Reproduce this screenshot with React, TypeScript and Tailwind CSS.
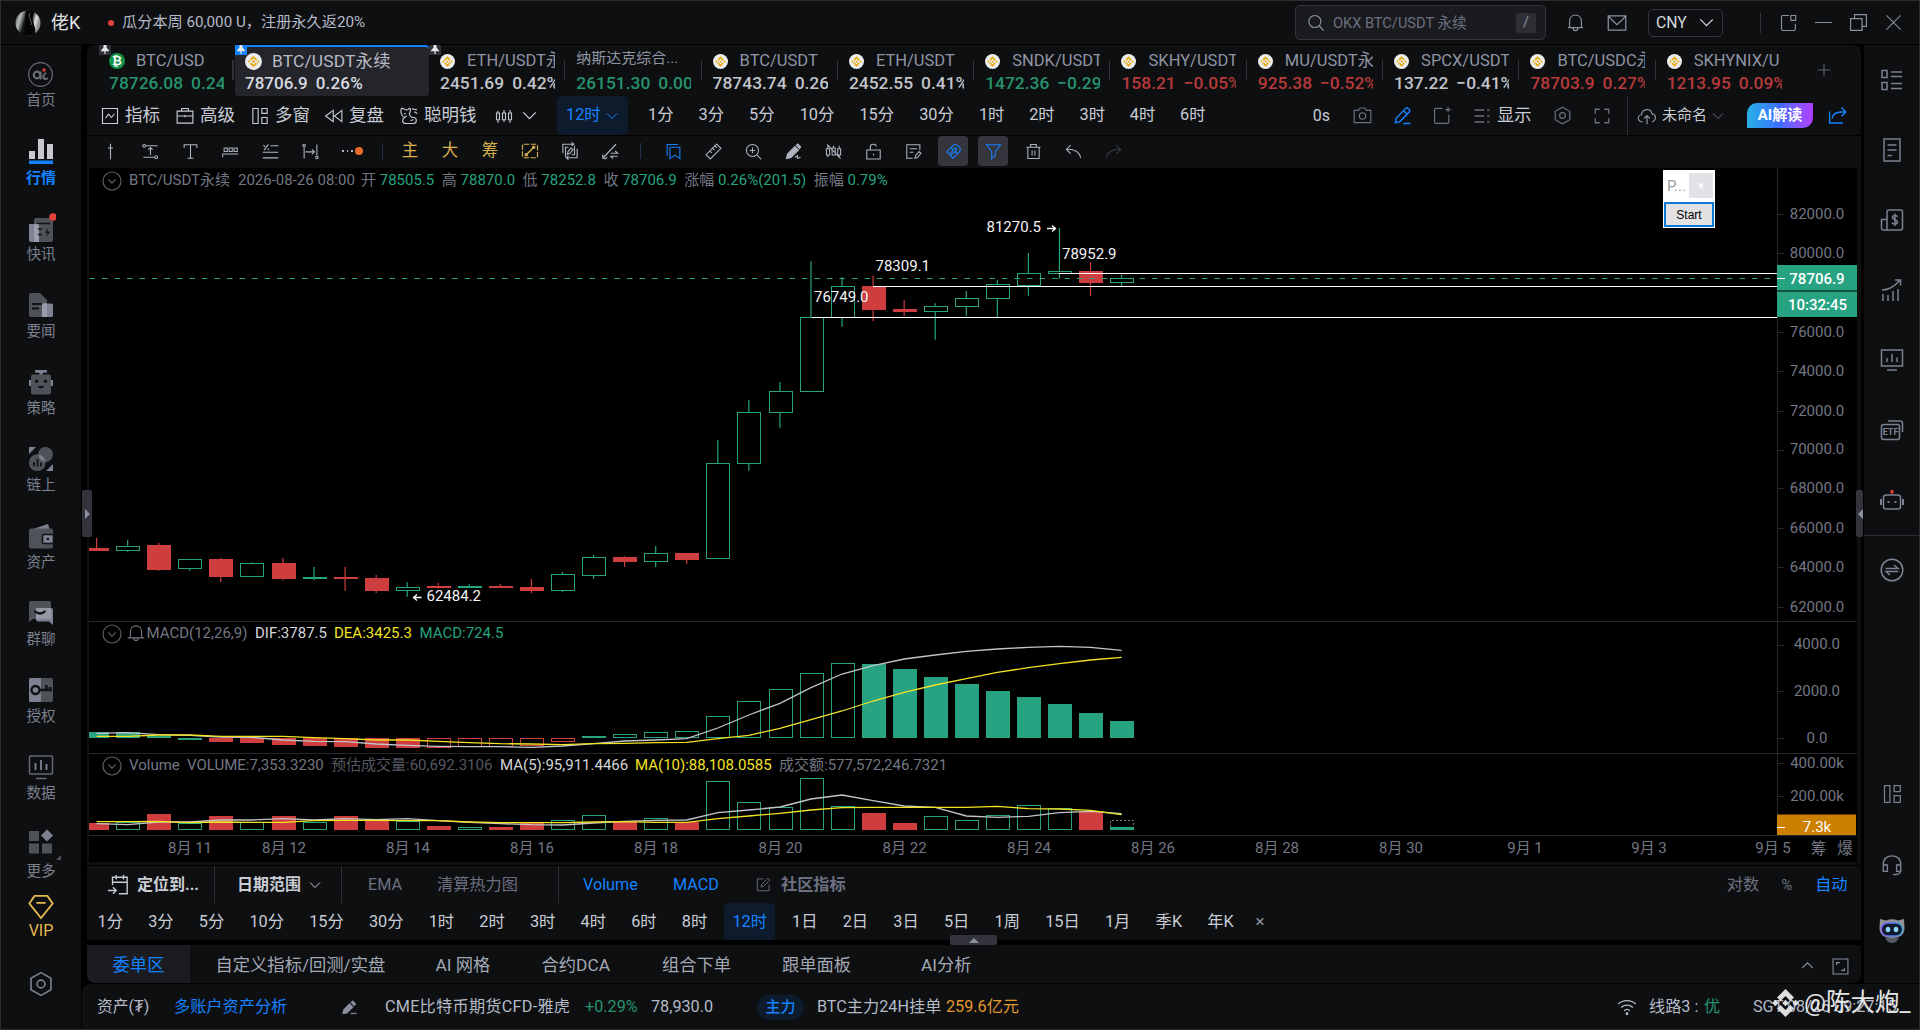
import React from 'react'

const BLUE = '#1583ff'
const GREEN = '#27a381'
const RED = '#cf3e3e'

interface IconProps {
  size?: number;
  className?: string;
  sw?: number;
  children: React.ReactNode;
}

function Icon({ size = 20, className = '', sw = 1.5, children }: IconProps) {
  return (
    <svg width={size} height={size} viewBox="0 0 24 24" fill="none" stroke="currentColor" strokeWidth={sw}
      className={`shrink-0 ${className}`}>
      {children}
    </svg>
  )
}

function Chevron({ size = 14, className = '', up = false }: { size?: number; className?: string; up?: boolean }) {
  return (
    <Icon size={size} className={className} sw={2}>
      {up ? <path d="M2 17 L12 7 L22 17" /> : <path d="M2 7 L12 17 L22 7" />}
    </Icon>
  )
}

// fixed width slot that centres an icon or a label
function Slot({ w, children, className = '' }: { w: string; children?: React.ReactNode; className?: string }) {
  return <div className={`flex shrink-0 items-center justify-center ${w} ${className}`}>{children}</div>
}

const hexagon = (
  <>
    <path d="M12 1.5 L21.2 6.7 V17.3 L12 22.5 L2.8 17.3 V6.7 Z" />
    <circle cx="12" cy="12" r="3.6" />
  </>
)

/* ---------- header ---------- */

function Header() {
  return (
    <header className="flex h-[43px] shrink-0 items-center bg-[#0d0f11] text-[#8b90a0]">
      <svg width="26" height="30" viewBox="0 0 26 30" className="ml-[14px] shrink-0">
        <defs>
          <linearGradient id="avatar" x1="0" x2="1" y1="0" y2="0.3">
            <stop offset="0" stopColor="#3c3f42" />
            <stop offset="0.25" stopColor="#b9bcbd" />
            <stop offset="0.45" stopColor="#16181a" />
            <stop offset="0.66" stopColor="#0a0b0c" />
            <stop offset="0.85" stopColor="#e3e4e4" />
            <stop offset="1" stopColor="#8a8c8e" />
          </linearGradient>
        </defs>
        <circle cx="13" cy="15" r="12.5" fill="url(#avatar)" />
        <path d="M11 3 C9 12 12 14 8 26 Q13 29 20 26 C22 18 15 13 19 4 Z" fill="#050506" />
        <path d="M15 5 C12 10 18 12 16 17" fill="none" stroke="#6d7072" strokeWidth="0.8" />
      </svg>
      <span className="ml-[10px] w-[31px] whitespace-nowrap text-[18px] leading-none text-[#e1e3e8]">佬K</span>
      <span className="ml-[26px] size-[6px] rounded-full bg-[#e0433c]" />
      <span className="ml-[8px] whitespace-nowrap text-[15.2px] text-[#b5bac7]">瓜分本周 60,000 U，注册永久返20%</span>

      <div className="ml-auto flex h-[35px] w-[251px] items-center rounded-[5px] border border-[#34363c] bg-[#1a1b1f]">
        <Icon size={18} className="ml-[11px]"><circle cx="10.5" cy="10" r="8" /><path d="M16.5 16 L22 22" /></Icon>
        <span className="ml-[8px] pt-[3px] text-[14.6px] text-[#6c7080]">OKX BTC/USDT 永续</span>
        <span className="ml-auto mr-[9px] flex size-[20px] items-center justify-center rounded-[3px] bg-[#2e2f35] text-[14px]">/</span>
      </div>
      <Slot w="w-[59px]">
        <Icon size={19}><path d="M4.5 18.5 V11 C4.5 6 7.5 2.5 12 2.5 S19.5 6 19.5 11 V18.5 M2.5 18.5 H21.5 M9 19 C9 23.4 15 23.4 15 19" /></Icon>
      </Slot>
      <Slot w="w-[24px]">
        <Icon size={20}><path d="M1.5 3.5 H22.5 V20.5 H1.5 Z M6 8.5 L12 14 L18 8.5 M2 4 L6 8.5 M22 4 L18 8.5" /></Icon>
      </Slot>
      <div className="ml-[19px] flex h-[33px] w-[75px] items-center rounded-[5px] border border-[#34363c] text-[#d5d8df] max-h-[28px]">
        <span className="ml-[7px] w-[33px] text-[15.8px]">CNY</span>
        <Chevron className="ml-[10px]" size={15} />
      </div>
      <span className="ml-[37px] h-[20px] w-px bg-[#34363c]" />
      <Slot w="w-[35px]" className="ml-[10px]">
        <Icon size={18}><path d="M12 2 H4 Q2 2 2 4 V20 Q2 22 4 22 H18.5 Q20.5 22 20.5 20 V13 M14.5 2 H21 V8.5 H14.5 Z" /></Icon>
      </Slot>
      <Slot w="w-[35px]"><span className="h-[1.5px] w-[17px] bg-[#8b90a0]" /></Slot>
      <Slot w="w-[35px]">
        <Icon size={19}><path d="M2 7 H16.5 V22 H2 Z M7 7 V2 H22 V17 H16.5" /></Icon>
      </Slot>
      <Slot w="w-[35px]" className="mr-[8px]"><Icon size={17}><path d="M2 2 L22 22 M22 2 L2 22" /></Icon></Slot>
    </header>
  )
}

/* ---------- left navigation ---------- */

const A = '#4f5259'
const B = '#7d8191'

const navItems = [
  {
    label: '首页', active: false, icon: (
      <svg width="25" height="25" viewBox="0 0 25 25" fill="none" stroke="#6a6d76">
        <circle cx="12.5" cy="12.5" r="11.8" strokeWidth="1.2" />
        <circle cx="9" cy="13" r="3.3" strokeWidth="2.2" />
        <path d="M12.6 9.5 V17.5" strokeWidth="2" />
        <path d="M19.8 16 C17 18.6 14 15.500 16 13 L18 10.500" strokeWidth="2" />
        <circle cx="16" cy="8" r="1.8" fill="#d83b3b" stroke="none" />
      </svg>
    )
  },
  {
    label: '行情', active: true, icon: (
      <svg width="26" height="26" viewBox="0 0 26 26">
        <path d="M1 13 H7 V21 H1 Z M10 1 H16 V21 H10 Z M19 6 H25 V21 H19 Z" fill="#c6c8cd" />
        <path d="M1 22.500 H25 V26 H1 Z" fill={BLUE} />
      </svg>
    )
  },
  {
    label: '快讯', active: false, icon: (
      <svg width="30" height="30" viewBox="0 0 30 30">
        <rect x="8" y="5" width="19" height="24" rx="2" fill={A} />
        <path d="M3 11 H13 V29 H5 Q3 29 3 27 Z" fill={B} />
        <path d="M8 11 H13 V29 H8 Z" fill="#9a9dab" />
        <path d="M11 10.5 H24 M12 16 H16 M12 21.5 H16" stroke="#111316" strokeWidth="1.6" />
        <path d="M22 15 L19 20 H21.5 L20.5 24 L24 18.5 H21.5 Z" fill="#111316" />
        <circle cx="27" cy="4" r="3.8" fill="#e0433c" />
      </svg>
    )
  },
  {
    label: '要闻', active: false, icon: (
      <svg width="26" height="26" viewBox="0 0 26 26">
        <path d="M3 1 H12 L19 8 V25 H3 Q1 25 1 23 V3 Q1 1 3 1 Z" fill={A} />
        <path d="M4 12 H14 M4 16.5 H11" stroke="#111316" strokeWidth="1.8" />
        <rect x="14" y="11.5" width="11" height="13.5" rx="1.5" fill={B} />
        <path d="M14 11.5 H19 V25 H14 Z" fill="#989caa" />
      </svg>
    )
  },
  {
    label: '策略', active: false, icon: (
      <svg width="26" height="26" viewBox="0 0 26 26">
        <path d="M7 1 H19 V3.5 L14.5 4 V6 H11.5 V4 L7 3.5 Z M1 11 H5 V17 H1 Z M21 11 H25 V17 H21 Z" fill={B} />
        <rect x="3" y="5.5" width="20" height="20" rx="2" fill={A} />
        <circle cx="8.5" cy="12.3" r="1.8" fill="#111316" /><circle cx="17.5" cy="12.3" r="1.8" fill="#111316" />
        <path d="M10 17.5 Q13 20.5 16 17.5 Z" fill="#111316" stroke="#111316" />
      </svg>
    )
  },
  {
    label: '链上', active: false, icon: (
      <svg width="26" height="26" viewBox="0 0 26 26">
        <circle cx="17.5" cy="8.5" r="7.5" fill={A} /><circle cx="9.3" cy="16.7" r="8.4" fill={A} />
        <path d="M10.5 8.6 A8.4 8.4 0 0 1 17.3 15.8 A7.5 7.5 0 0 1 10.5 8.6 Z" fill="#7b7e8b" />
        <path d="M1 1 H8 L1 8 Z M25 18 V25 H18 Z" fill={B} />
        <path d="M6 16 V20.5 M9.5 13 V20.5 M13 16.5 V20.5" stroke="#111316" strokeWidth="1.8" />
      </svg>
    )
  },
  {
    label: '资产', active: false, icon: (
      <svg width="26" height="26" viewBox="0 0 26 26">
        <path d="M5 6 L20 1 L21.5 6 Z" fill={B} />
        <rect x="1" y="5.5" width="24" height="20" rx="2" fill={A} />
        <rect x="14.5" y="11.5" width="11" height="9" rx="1" fill={B} stroke="#111316" strokeWidth="1.6" />
        <path d="M18.5 15 H21 V17 H18.5 Z" fill="#111316" />
      </svg>
    )
  },
  {
    label: '群聊', active: false, icon: (
      <svg width="26" height="26" viewBox="0 0 26 26">
        <path d="M3 1 H21 Q23 1 23 3 V19 H5 L1 22 V3 Q1 1 3 1 Z" fill={A} />
        <path d="M10 8 H23 Q25 8 25 10 V25 L21 21.5 H10 Q8 21.5 8 19.5 V10 Q8 8 10 8 Z" fill={B} />
        <path d="M8 8 H23 V19 H8 Z" fill="#9699a5" />
        <path d="M6.5 11 Q12 16 17.5 11" fill="none" stroke="#111316" strokeWidth="2.2" />
      </svg>
    )
  },
  {
    label: '授权', active: false, icon: (
      <svg width="26" height="26" viewBox="0 0 26 26">
        <rect x="1" y="1" width="24" height="24" rx="2" fill={A} />
        <path d="M3 1 H13 V25 H3 Q1 25 1 23 V3 Q1 1 3 1 Z" fill={B} />
        <circle cx="7.5" cy="13" r="4" fill="none" stroke="#111316" strokeWidth="2.4" />
        <path d="M11.5 13 H24 M18.5 13 V8 M22 13 V10" stroke="#111316" strokeWidth="2.6" />
      </svg>
    )
  },
  {
    label: '数据', active: false, icon: (
      <svg width="26" height="26" viewBox="0 0 26 26" fill="none" stroke="#7d8191" strokeWidth="1.5">
        <rect x="1.5" y="2" width="23" height="18" rx="1" stroke="#676a74" />
        <path d="M7.5 9 V16 M13 6 V16 M18.5 10 V16" strokeWidth="1.8" /><path d="M8 24.5 H18.5" stroke="#676a74" />
      </svg>
    )
  },
  {
    label: '更多', active: false, icon: (
      <svg width="46" height="32" viewBox="0 0 46 32">
        <path d="M11 3 H21 V13 H11 Z M11 15.500 H21 V25.500 H11 Z M24 15.500 H34 V25.500 H24 Z" fill={A} />
        <path d="M29 1.500 L35 7.500 L29 13.500 L23 7.500 Z" fill={B} />
        <path d="M43 27 V32 H38 Z" fill={A} />
      </svg>
    )
  },
]

function LeftNav() {
  return (
    <nav className="flex w-[80px] shrink-0 flex-col items-center bg-[#0d0f11] pt-[12px]">
      {navItems.map((n) => (
        <div key={n.label} className="flex h-[77px] shrink-0 flex-col items-center">
          <div className="flex h-[34px] items-center justify-center">{n.icon}</div>
          <span className={n.active
            ? 'mt-[-1.5px] text-[15px] font-bold text-[#1583ff]'
            : n.label === '更多' ? 'text-[14.6px] text-[#7c808e]' : 'mt-[-1.5px] text-[14.6px] text-[#7c808e]'}>{n.label}</span>
        </div>
      ))}
      <div className="mt-[-11px] flex flex-col items-center text-[#e3b94f]">
        <Icon size={28} sw={1.6}><path d="M6.500 2.500 H17.500 L22 9 L12 21.500 L2 9 Z M8 8.500 H16" /></Icon>
        <span className="mt-[-2px] text-[16px]">VIP</span>
      </div>
      <Icon size={26} className="mt-[28px] text-[#7c808e]">{hexagon}</Icon>
    </nav>
  )
}

/* ---------- symbol tabs ---------- */

interface Tab {
  name: string;
  price: string;
  color: string;
  coin?: 'bnb' | 'btc';
  pin?: boolean;
}

const tabs: Tab[] = [
  { name: 'ETH/USDT永续', price: '2451.69 0.42%', color: 'text-[#c3c5cb]', coin: 'bnb', pin: true },
  { name: '纳斯达克综合...', price: '26151.30 0.00%', color: 'text-[#27936f]' },
  { name: 'BTC/USDT', price: '78743.74 0.26%', color: 'text-[#c3c5cb]', coin: 'bnb' },
  { name: 'ETH/USDT', price: '2452.55 0.41%', color: 'text-[#c3c5cb]', coin: 'bnb' },
  { name: 'SNDK/USDT', price: '1472.36 −0.29%', color: 'text-[#27936f]', coin: 'bnb' },
  { name: 'SKHY/USDT', price: '158.21 −0.05%', color: 'text-[#b83a3a]', coin: 'bnb' },
  { name: 'MU/USDT永续', price: '925.38 −0.52%', color: 'text-[#b83a3a]', coin: 'bnb' },
  { name: 'SPCX/USDT', price: '137.22 −0.41%', color: 'text-[#c3c5cb]', coin: 'bnb' },
  { name: 'BTC/USDC永续', price: '78703.9 0.27%', color: 'text-[#b83a3a]', coin: 'bnb' },
  { name: 'SKHYNIX/U', price: '1213.95 0.09%', color: 'text-[#b83a3a]', coin: 'bnb' },
]

function Coin({ kind, size = 15 }: { kind: 'bnb' | 'btc'; size?: number }) {
  if (kind === 'btc') {
    return (
      <span className="flex size-[16px] shrink-0 items-center justify-center rounded-full bg-[#129147] text-[12px] font-bold leading-none text-white">₿</span>
    )
  }
  return (
    <svg width={size} height={size} viewBox="0 0 18 18" className="shrink-0">
      <circle cx="9" cy="9" r="9" fill="#ececec" />
      <g fill="#e8ab14">
        <path d="M9 2.800 L12.900 6.700 L11.500 8.100 L9 5.600 L6.500 8.100 L5.100 6.700 Z" />
        <path d="M9 15.200 L12.900 11.300 L11.500 9.900 L9 12.400 L6.500 9.900 L5.100 11.300 Z" />
        <path d="M9 7.400 L10.600 9 L9 10.600 L7.400 9 Z M4.200 7.600 L5.600 9 L4.200 10.400 L2.800 9 Z M13.800 7.600 L15.200 9 L13.800 10.400 L12.400 9 Z" />
      </g>
    </svg>
  )
}

function Pin({ blue = false }: { blue?: boolean }) {
  return (
    <svg width="12" height="10" viewBox="0 0 12 10" className="absolute top-0 left-0">
      <path d="M0 0 H12 V10 H0 Z" fill={blue ? BLUE : '#303136'} />
      <path d="M4.500 0 H7.500 V2.500 L10 5.500 V6.300 H2 V5.500 L4.500 2.500 Z M5.400 6 H6.600 V9 H5.400 Z" fill="#e6e7ea" />
    </svg>
  )
}

function SymbolTabs() {
  return (
    <div className="flex h-[50px] shrink-0">
      <div className="relative flex ml-[12px] w-[136px] shrink-0 pt-[6px] pl-[10px]">
        <Pin />
        <div className="w-[115px] overflow-hidden whitespace-nowrap">
          <div className="flex h-[20px] items-center text-[16.5px] text-[#8f94a3]"><Coin kind="btc" /><span className="ml-[11px]">BTC/USD</span></div>
          <div className="flex h-[25px] items-center text-[17.4px] font-medium text-[#27936f]"><span>78726.08</span><span className="ml-[8px]">0.24%</span></div>
        </div>
        <span className="mt-[9px] ml-[8px] h-[20px] w-[2px] bg-[#303238]" />
      </div>
      <div className="relative h-[51px] w-[194px] shrink-0 rounded-[4px] border-t-2 border-[#1583ff] bg-[#24252b] pt-[4px] pl-[10px] whitespace-nowrap">
        <div className="flex h-[21px] items-center text-[17.4px] text-[#b7bac4]"><Coin kind="bnb" size={17} /><span className="ml-[10px] tracking-[0.15px]">BTC/USDT永续</span></div>
        <div className="flex h-[24px] items-center text-[17px] font-medium text-[#d9dbe0]"><span>78706.9</span><span className="ml-[8px] tracking-[0.2px]">0.26%</span></div>
        <div className="absolute top-[-2px] left-0"><Pin blue /></div>
      </div>
      {tabs.map((t, i) => {
        const [price, pct] = t.price.split(' ')
        return (
          <div key={i} className="relative flex w-[136.300px] shrink-0 pt-[6px] pl-[11px]">
            {t.pin && <Pin />}
            <div className="w-[115px] overflow-hidden whitespace-nowrap">
              {t.coin
                ? <div className="flex h-[20px] items-center text-[16.500px] text-[#8f94a3]"><Coin kind={t.coin} /><span className="ml-[12px]">{t.name}</span></div>
                : <div className="flex h-[20px] items-center pb-[5px] text-[15px] text-[#8f94a3]">{t.name}</div>}
              <div className={`flex h-[25px] items-center text-[17.400px] font-medium ${t.color}`}><span>{price}</span><span className="ml-[8px]">{pct}</span></div>
            </div>
            {i < tabs.length - 1 && <span className="mt-[9px] ml-auto h-[20px] w-px bg-[#303238]" />}
          </div>
        )
      })}
      <Slot w="w-[65px]" className="text-[#6c7080]"><Icon size={14}><path d="M12 1 V23 M1 12 H23" /></Icon></Slot>
    </div>
  )
}

/* ---------- toolbars ---------- */

const menu = [
  { label: '指标', w: 'w-[75px]', icon: <path d="M2 2 H22 V22 H2 Z M6 15 L10 9.500 L14 14 L18 9" /> },
  { label: '高级', w: 'w-[75px]', icon: <path d="M1.500 5.500 H22.500 V21.500 H1.500 Z M1.500 12 H22.500 M7.500 5 V2 H16.500 V5 M12 10.500 V13.500" /> },
  { label: '多窗', w: 'w-[74px]', icon: <path d="M2.500 2 H9.500 V22 H2.500 Z M14.500 2 H21.500 V8.500 H14.500 Z M14.500 14 H21.500 V22 H14.500 Z" /> },
  { label: '复盘', w: 'w-[75px]', icon: <path d="M11 4.500 L1 12 L11 19.500 Z M22.500 4.500 L12.500 12 L22.500 19.500 Z" /> },
  { label: '聪明钱', w: 'w-[90px]', icon: <path d="M2 2 C5 1 6 4 9 4 C12 4 11 1 13.500 2 C15 5 13 7 12.500 9 C13 12 14 14 18 14 C23 14 23 22 18 22 H8 C3 22 2 17 6 14 C2 12 0 6 2 2 Z M16 3 C18 1 20 5 22.500 3 M19 7 C21 6 22 9 23 8 M5 9 H8 M14 18 L18 17 M6 14 L9 12" /> },
]

const frames: [string, string][] = [
  ['1分', 'w-[50.500px]'], ['3分', 'w-[50.500px]'], ['5分', 'w-[50.500px]'], ['10分', 'w-[60px]'], ['15分', 'w-[59.500px]'], ['30分', 'w-[60px]'],
  ['1时', 'w-[50.300px]'], ['2时', 'w-[50.300px]'], ['3时', 'w-[50.300px]'], ['4时', 'w-[50.300px]'], ['6时', 'w-[50.300px]'],
]

function MainToolbar() {
  return (
    <div className="flex h-[39px] shrink-0 items-center text-[17px] text-[#c9ccd5]">
      <div className="flex pl-[14px]">
        {menu.map((m) => (
          <div key={m.label} className={`flex shrink-0 items-center whitespace-nowrap ${m.w}`}>
            <Icon size={18}>{m.icon}</Icon>
            <span className="ml-[6px] text-[17.500px]">{m.label}</span>
          </div>
        ))}
      </div>
      <div className="ml-[5px] flex w-[62px] items-center">
        <Icon size={18}><path d="M2 8 H6 V17 H2 Z M4 5 V8 M4 17 V21 M10 8 H14 V17 H10 Z M12 4 V8 M12 17 V20 M18 8 H22 V17 H18 Z M20 4 V8 M20 17 V21" /></Icon>
        <Chevron className="ml-[9px]" size={15} />
      </div>
      <div className="flex h-[39px] w-[71px] shrink-0 items-center rounded-[5px] bg-[#0d1b2c] pl-[9px] text-[#1583ff]">
        <span className="w-[40px] text-[16.300px]">12时</span>
        <Chevron size={12} />
      </div>
      <div className="flex pl-[7.500px]">
        {frames.map(([f, w]) => <Slot key={f} w={w} className="text-[16.300px]">{f}</Slot>)}
      </div>
      <span className="ml-auto text-[16px]">0s</span>
      <div className="ml-[12px] flex text-[#6c7080]">
        <Slot w="w-[40px]"><Icon size={19}><path d="M1.500 5.500 H7 L9 2.500 H15 L17 5.500 H22.500 V21 H1.500 Z" /><circle cx="12" cy="12.500" r="4" /></Icon></Slot>
        <Slot w="w-[40px]" className="text-[#1583ff]"><Icon size={19} sw={1.800}><path d="M3 21 L4 15.500 L16 3 Q17.500 1.500 19 3 L20.500 4.500 Q22 6 20.500 7.500 L8.500 20 Z M13.500 6 L17.500 10 M13 22 H22" /></Icon></Slot>
        <Slot w="w-[40px]"><Icon size={19}><path d="M12 3 H4 Q2 3 2 5 V20 Q2 22 4 22 H18 Q20 22 20 20 V11 M19 1 V8 M15.500 4.500 H22.500" /></Icon></Slot>
        <Slot w="w-[40px]"><Icon size={18} className="text-[#9a9dab]"><path d="M2 4 H15 M2 12 H15 M2 20 H15 M19 4 H22 M19 12 H22 M19 20 H22" /></Icon></Slot>
      </div>
      <span className="ml-[-5px] w-[35px] text-[17.300px] whitespace-nowrap">显示</span>
      <div className="ml-[10px] flex text-[#6c7080]">
        <Slot w="w-[40px]"><Icon size={19}>{hexagon}</Icon></Slot>
        <Slot w="w-[40px]"><Icon size={18} sw={1.800}><path d="M3 9 V3 H9 M15 3 H21 V9 M21 15 V21 H15 M9 21 H3 V15" /></Icon></Slot>
      </div>
      <span className="ml-[5px] h-full w-px bg-[#2c2e34]" />
      <Icon size={20} className="ml-[9px] text-[#8b90a0]"><path d="M7 19 C0 19 0 11 5.500 10.500 C6 3 17 2 18 9.500 C23 10 24 17 18 19 M12 22 V12 M8.500 15 L12 11.500 L15.500 15" /></Icon>
      <span className="ml-[5px] w-[50px] text-[15px] whitespace-nowrap">未命名</span>
      <Chevron size={12} className="text-[#6c7080]" />
      <span className="ml-[23px] flex h-[25px] w-[66px] items-center justify-center rounded-tl-[10px] rounded-br-[10px] bg-linear-to-r from-[#2ab0e3] via-[#3d6bff] to-[#ad3bff] text-[15px] font-bold text-white">AI解读</span>
      <Slot w="w-[48px]" className="text-[#1583ff]"><Icon size={19} sw={1.800}><path d="M2 7 V21.500 H19 M5 16 C6 10 11 7.500 17 7.500 H22 M17 2 L22.500 7.500 L17 13" /></Icon></Slot>
    </div>
  )
}

const drawLeft = [
  <path key="0" d="M12 1 V23 M8.500 7 H15.500" />,
  <><path d="M5 4 H22 M2 20 H18 M12 6.500 V17 M9 9.500 L12 6.500 L15 9.500" /><circle cx="3" cy="4" r="2" /><circle cx="20" cy="20" r="2" /></>,
  <path key="2" d="M3 7 V2.500 H21 V7 M12 2.500 V21.500 M8 21.500 H16" />,
  <path key="3" d="M1 20 V15.500 H23 M3 7 H7.500 V12 H3 Z M10 7 H14.500 V12 H10 Z M17 7 H21.500 V12 H17 Z" />,
  <path key="4" d="M1 21 H23 M1 13 H23 M12 4 H23 M2 3 L4.500 5.500 M9 2 L3 10 M8 8 L10 10" />,
  <><path d="M3 6 V22 M21 2 V18 M5 12.500 H17.500 M14 9 L17.500 12.500 L14 16" /><circle cx="3" cy="3.500" r="1.800" /><circle cx="21" cy="20.500" r="1.800" /></>,
]

const drawMid = [
  <path key="0" d="M2.500 15 V3 H17 M14 0.500 L17 3 L14 5.500 M21.500 9 V21 H7 M10 18.500 L7 21 L10 23.500 M6 20 V7 H10 M18 5 V17 H14 M8.500 16.500 L9.500 12.500 L13.500 8 L16 10 L12 15 Z" />,
  <path key="1" d="M2 22 L20 3 M3 17 A3 3 0 1 0 8 20 M13 15 H22 L19 12 M22 19 H13 L16 22" />,
]

const drawRight = [
  { c: 'text-[#1583ff]', bg: '', icon: <path d="M7 6 H21 V22 L14 17 L7 22 Z M3 18 V2 H18" /> },
  { c: '', bg: '', icon: <path d="M16.500 1.500 L22.500 7.500 L7.500 22.500 L1.500 16.500 Z M7 11.500 L9.500 14 M11 7.500 L13.500 10 M14.500 4.500 L17 7" /> },
  { c: '', bg: '', icon: <><circle cx="10.500" cy="10.500" r="8.500" /><path d="M17 17 L23 23 M6.500 10.500 H14.500 M10.500 6.500 V14.500" /></> },
  { c: '', bg: '', icon: <><path d="M2 22 L3.500 15.500 L14 5 L19 10 L8.500 20.500 Z M16 3 L18 1.500 L22 5.500 L20.500 8 Z" fill="currentColor" /><path d="M14 20 L17.500 18 V21.500 L22 20" /></> },
  { c: '', bg: '', icon: <path d="M2 8 H6.500 V17 H2 Z M4 4 V8 M4 17 V20 M10 7 H14.500 V17 H10 Z M12 4 V7 M18 8 H22 V17 H18 Z M20 4 V8 M20 17 V20 M3 2 L22 22" /> },
  { c: '', bg: '', icon: <path d="M2.500 10 H21.500 V22.500 H2.500 Z M7.500 10 V5.500 C7.500 0.500 16 0.500 16 5 M12 15 V17.500" /> },
  { c: '', bg: '', icon: <path d="M21 10 V2.500 H2.500 V21.500 H11 M6.500 8 H17 M6.500 13 H12 M14 21.500 L15 17.500 L20 12 L22.500 14.500 L17.500 20.500 Z" /> },
  { c: 'text-[#1583ff]', bg: 'bg-[#34353d]', icon: <path d="M2.500 12.500 L11 4 C16 -1 25 7 20 13 L11.500 21.500 L7.500 18 L16 10 C17.500 8 15.500 6 13.500 7.500 L6.500 16 Z M8.500 6.500 L12 10 M17.500 15 L14.500 12" /> },
  { c: 'text-[#1583ff]', bg: 'bg-[#34353d]', icon: <path d="M2 2.500 H22 L14.500 12 V18 L9.500 22 V12 Z" /> },
  { c: '', bg: '', icon: <path d="M2 6 H22 M8 6 V2 H16 V6 M4 6 V22 H20 V6 M10 10.500 V17.500 M14 10.500 V17.500" /> },
  { c: '', bg: '', icon: <path d="M8 3 L2 9 L8 15 M2 9 C13 8 21 13 22 21" /> },
  { c: 'text-[#3b3e46]', bg: '', icon: <path d="M16 3 L22 9 L16 15 M22 9 C11 8 3 13 2 21" /> },
]

function DrawToolbar() {
  return (
    <div className="flex h-[30px] shrink-0 items-center pl-[3px] text-[#b0b4c1]">
      {drawLeft.map((p, i) => <Slot key={i} w="w-[40px]"><Icon size={17}>{p}</Icon></Slot>)}
      <div className="flex w-[52px] items-center pl-[12px]">
        <span className="flex gap-[3px]"><i className="size-[1.500px] bg-current" /><i className="size-[1.500px] bg-current" /><i className="size-[1.500px] bg-current" /></span>
        <span className="ml-[2px] size-[8px] rounded-full bg-[#ee6a2b]" />
      </div>
      <span className="h-[16px] w-px bg-[#24314a]" />
      <div className="ml-[7px] flex text-[16.500px] text-[#d9b04c]">
        <Slot w="w-[40px]">主</Slot>
        <Slot w="w-[40px]">大</Slot>
        <Slot w="w-[40px]">筹</Slot>
        <Slot w="w-[40px]"><Icon size={18}><rect x="2" y="3" width="20" height="18" rx="2" strokeDasharray="7 2" /><path d="M6 18 L18 6" strokeWidth="2" /><circle cx="17" cy="7" r="1.600" /><circle cx="7" cy="17" r="1.600" /></Icon></Slot>
      </div>
      {drawMid.map((p, i) => <Slot key={i} w="w-[40px]"><Icon size={18}>{p}</Icon></Slot>)}
      <span className="ml-[10px] h-[16px] w-px bg-[#24314a]" />
      <div className="ml-[12px] flex">
        {drawRight.map((d, i) => (
          <Slot key={i} w="w-[40.050px]">
            <div className={`flex size-[30px] items-center justify-center rounded-[4px] ${d.bg} ${d.c}`}>
              <Icon size={17}>{d.icon}</Icon>
            </div>
          </Slot>
        ))}
      </div>
    </div>
  )
}

/* ---------- chart ---------- */

const STEP = 31.06
const cx = (i: number) => 96.6 + STEP * i

// [high, body top, body bottom, low, r: down / g: up]
const candles: [number, number, number, number, 'r' | 'g'][] = [
  [537.7, 548, 551, 551, 'r'], [540, 545.7, 551, 551.7, 'g'], [542.7, 545.3, 569.7, 570.7, 'r'], [559, 559.3, 569, 570.7, 'g'],
  [557.7, 559.3, 577, 582.3, 'r'], [562.3, 563, 577, 577, 'g'], [558, 563, 579.3, 580.7, 'r'], [567, 577, 579, 580.3, 'g'],
  [567, 577, 579, 590.7, 'r'], [575, 577.7, 591, 593, 'r'], [582.3, 587, 590.7, 596.7, 'g'], [583, 585.7, 588, 588.7, 'r'],
  [584, 585.7, 588, 588, 'g'], [584, 585.7, 588, 588, 'r'], [579, 587, 591, 593, 'r'], [572, 574.3, 591, 592, 'g'],
  [555, 557, 575.7, 578.7, 'g'], [556, 556.7, 562, 567, 'r'], [546, 553, 562, 567.3, 'g'], [553, 553, 559.7, 564, 'r'],
  [440, 463.3, 559, 559, 'g'], [400.3, 412, 464, 470.7, 'g'], [382, 391, 413, 427.7, 'g'], [261.3, 317, 392, 392, 'g'],
  [277.3, 286, 317.5, 326.7, 'g'], [275.7, 285.7, 310.3, 321.3, 'r'], [300, 309, 312, 316, 'r'], [303.3, 305.7, 312, 339.7, 'g'],
  [291, 298, 307, 316, 'g'], [280.3, 284.3, 299, 318.3, 'g'], [253, 273.3, 286, 295.7, 'g'], [228, 270.7, 274, 278.7, 'g'],
  [262, 270.7, 283, 296, 'r'], [275, 278.3, 283, 287.3, 'g'],
]

const ZERO = 737.7
// [edge of the bar, colour, hollow]
const macd: [number, 'r' | 'g', boolean][] = [
  [732, 'g', false], [732, 'g', false], [735.7, 'g', false], [739.3, 'g', false], [742, 'r', false], [743, 'r', false],
  [744.7, 'r', false], [746, 'r', false], [747, 'r', false], [748, 'r', false], [748, 'r', false], [748, 'r', true],
  [747.3, 'r', true], [746.7, 'r', true], [745.7, 'r', true], [741.7, 'r', true], [736, 'g', false], [734.3, 'g', true],
  [732, 'g', true], [731, 'g', true], [716, 'g', true], [701, 'g', true], [689.3, 'g', true], [673, 'g', true],
  [663, 'g', true], [664, 'g', false], [669, 'g', false], [677, 'g', false], [684, 'g', false], [690.7, 'g', false],
  [697, 'g', false], [704, 'g', false], [713, 'g', false], [721, 'g', false],
]

const dif = [733.3, 732.7, 734.7, 735.3, 737, 737.3, 740, 741.3, 741.7, 744, 745.3, 746.3, 746.7, 746.7, 747.3, 746, 743.7, 741, 740, 738.7, 728, 715, 703.3, 687.7, 674, 665.7, 659, 655, 651.3, 649, 647.3, 646.3, 647.3, 650.3]
const dea = [736.3, 736.3, 735, 735, 736.3, 736.3, 736.3, 737.7, 738.7, 740, 740, 741.3, 742.7, 743.7, 744, 744.7, 743.7, 743.3, 742.7, 742.3, 738.7, 735.3, 728.3, 719.7, 711, 701, 692.3, 685, 678.7, 672.3, 667.7, 663.7, 660, 657.3]

const volume = [823.3, 822.3, 814.3, 823.3, 816, 822, 816, 821.7, 816, 821, 820.7, 826, 827, 827, 823.3, 820, 814.7, 822, 818.3, 821.7, 781, 802, 807.3, 778.3, 806.3, 813, 823, 816, 820, 814.7, 804.7, 807.7, 812, 827]
const ma5 = [823.7, 824.7, 822, 822, 820, 820, 818.7, 820, 818.7, 819.7, 818.7, 820.7, 822.3, 823.7, 824.7, 825, 823, 821.3, 820.3, 820, 812.7, 810, 807, 799, 795, 800.7, 806, 807.3, 816, 817.3, 816.3, 812.7, 811.3, 813.7]
const ma10 = [821.7, 821.7, 821.3, 822.7, 822, 822.3, 822.3, 820.7, 820.3, 820.3, 820.7, 820.7, 822, 822.7, 822.7, 822.7, 822, 821.7, 822.3, 822.3, 818.7, 816, 813.3, 810, 807.7, 807.3, 807.3, 807.3, 807.3, 806.3, 808.7, 809, 810.3, 814.7]

const priceAxis: [string, number][] = [
  ['82000.0', 214.3], ['80000.0', 253], ['76000.0', 332], ['74000.0', 371], ['72000.0', 411], ['70000.0', 449.5],
  ['68000.0', 488], ['66000.0', 528.3], ['64000.0', 567], ['62000.0', 607], ['4000.0', 644.5], ['2000.0', 691], ['0.0', 738.3],
  ['400.00k', 763.3], ['200.00k', 796],
]

const dates: [string, number][] = [
  ['8月 11', 190], ['8月 12', 284], ['8月 14', 408], ['8月 16', 532], ['8月 18', 656], ['8月 20', 780.5], ['8月 22', 904.6],
  ['8月 24', 1029], ['8月 26', 1153], ['8月 28', 1277], ['8月 30', 1401], ['9月 1', 1525], ['9月 3', 1649], ['9月 5', 1773],
]

const line = (ys: number[]) => ys.map((y, i) => `${cx(i).toFixed(1)},${y}`).join(' ')

function Bar({ i, top, bottom, color, hollow }: { i: number; top: number; bottom: number; color: string; hollow: boolean }) {
  const x = Math.round(cx(i) - 11.4)
  const t = Math.round(top)
  const h = Math.max(Math.round(bottom) - t, 2)
  if (hollow && h > 2) {
    return <rect x={x + 0.5} y={t + 0.5} width={23} height={h - 1} fill="none" stroke={color} />
  }
  return <rect x={x} y={t} width={24} height={h} fill={color} />
}

function Chart() {
  return (
    <svg width="1768" height="694" viewBox="89 168 1768 694" className="absolute inset-0 bg-black">
      <g stroke="#26282c" strokeWidth="1">
        <path d="M89 621.500 H1857 M89 753.500 H1857 M89 835.500 H1857 M1777.500 168 V835" />
        {priceAxis.map(([l, y]) => <path key={l} d={`M1778 ${Math.round(y) + 0.5} H1784`} />)}
      </g>
      {candles.map(([hi, top, bot, lo, c], i) => {
        const color = c === 'r' ? RED : GREEN
        const x = cx(i)
        return (
          <g key={i}>
            <path d={`M${x} ${hi} V${top} M${x} ${bot} V${lo}`} stroke={color} strokeWidth="1.2" />
            <Bar i={i} top={top} bottom={bot} color={color} hollow={c === 'g'} />
          </g>
        )
      })}
      {macd.map(([edge, c, hollow], i) => (
        <Bar key={i} i={i} top={Math.min(edge, ZERO)} bottom={Math.max(edge, ZERO)} color={c === 'r' ? RED : GREEN} hollow={hollow} />
      ))}
      {volume.map((top, i) => (
        <Bar key={i} i={i} top={top} bottom={829.7} color={candles[i][4] === 'r' ? RED : GREEN} hollow={candles[i][4] === 'g' && i < 33} />
      ))}
      <path d="M1110.500 827 V820.500 H1133.500 V827" fill="none" stroke="#7a7c82" strokeDasharray="2 2" />
      <g fill="none" strokeWidth="1.300">
        <polyline points={line(dif)} stroke="#c2c4c8" />
        <polyline points={line(dea)} stroke="#f3e324" />
        <polyline points={line(ma5)} stroke="#c2c4c8" />
        <polyline points={line(ma10)} stroke="#f3e324" />
      </g>
      <path d="M89.500 278.500 H1777" stroke={GREEN} strokeDasharray="5.500 7" />
      <path d="M1059 273.500 H1777 M873 286.500 H1777 M812 317.500 H1777" stroke="#fff" strokeWidth="1.200" />

      <g fontSize="15" fill="#f4f4f5">
        <text x="814" y="302">76749.0</text>
        <text x="875.500" y="271">78309.1</text>
        <text x="1062" y="258.500">78952.9</text>
        <text x="986.500" y="232">81270.5</text>
        <text x="426.500" y="601">62484.2</text>
      </g>
      <path d="M1047 228.500 H1055.500 M1052 225.500 L1055.500 228.500 L1052 231.500 M421.500 597.500 H413.500 M417 594.500 L413.500 597.500 L417 600.500" stroke="#fff" strokeWidth="1.300" fill="none" />

      <g fontSize="15" fill="#737784" textAnchor="middle">
        {priceAxis.map(([l, y]) => <text key={l} x="1817" y={y + 4.800}>{l}</text>)}
        {dates.map(([l, x]) => <text key={l} x={x} y="853">{l}</text>)}
        <text x="1818.500" y="854" fontSize="15.500">筹</text>
        <text x="1845" y="854" fontSize="15.500">爆</text>
      </g>
      <path d="M1777 265 H1857 V290.500 H1777 Z M1777 291.500 H1857 V317 H1777 Z" fill={GREEN} />
      <path d="M1777 814.500 H1856 V835 H1777 Z" fill="#cc8000" />
      <path d="M1777 278.500 H1785 M1777 827.500 H1785" stroke="#fff" />
      <g fontSize="15" fill="#fff" textAnchor="middle" fontWeight="500">
        <text x="1817" y="283.500">78706.9</text>
        <text x="1817.500" y="309.500">10:32:45</text>
        <text x="1817" y="832.200" fontWeight="400">7.3k</text>
      </g>
    </svg>
  )
}

function Fold() {
  return (
    <Icon size={20} className="text-[#5d606b]" sw={1.400}><circle cx="12" cy="12" r="10.800" /><path d="M7.500 10 L12 14.500 L16.500 10" /></Icon>
  )
}

const ohlc = [['开', '78505.5'], ['高', '78870.0'], ['低', '78252.8'], ['收', '78706.9'], ['涨幅', '0.26%(201.5)'], ['振幅', '0.79%']]

function ChartArea() {
  return (
    <div className="relative mt-[2px] ml-[2px] h-[694px] w-[1768px] shrink-0 text-[15px] leading-[20px] whitespace-nowrap text-[#737784]">
      <Chart />
      <div className="absolute top-[1px] left-[12.500px] flex items-center">
        <div className="pt-[1.500px]"><Fold /></div>
        <span className="ml-[7.500px] w-[109px]">BTC/USDT永续</span>
        <span className="w-[123px]">2026-08-26 08:00</span>
        {ohlc.map(([k, v]) => (
          <span key={k} className="mr-[7.500px]">{k} <span className="text-[#27a381]">{v}</span></span>
        ))}
      </div>
      <div className="absolute top-[454px] left-[12.500px] flex items-center">
        <div className="pt-[1.500px]"><Fold /></div>
        <Icon size={18} className="ml-[5.500px]"><path d="M4.500 18 V11 C4.500 6 7.500 2.500 12 2.500 S19.500 6 19.500 11 V18 M1 18.500 H23 M9 19 C9 23 15 23 15 19" /></Icon>
        <span className="ml-[1.500px] w-[108.500px]">MACD(12,26,9)</span>
        <span className="w-[79px] text-[#d4d5d8]">DIF:3787.5</span>
        <span className="w-[85.500px] text-[#f3e324]">DEA:3425.3</span>
        <span className="text-[#27a381]">MACD:724.5</span>
      </div>
      <div className="absolute top-[586.500px] left-[12.500px] flex items-center">
        <div className="pt-[1.500px]"><Fold /></div>
        <span className="ml-[7.500px] w-[58px]">Volume</span>
        <span className="w-[144px]">VOLUME:7,353.3230</span>
        <span className="w-[169px] text-[#555862]">预估成交量:60,692.3106</span>
        <span className="w-[135px] text-[#d4d5d8]">MA(5):95,911.4466</span>
        <span className="w-[144px] text-[#f3e324]">MA(10):88,108.0585</span>
        <span>成交额:577,572,246.7321</span>
      </div>
      {/* floating script window */}
      <div className="absolute top-[2px] left-[1574px] h-[58px] w-[52px] bg-white p-px">
        <div className="flex h-[31px] justify-between pt-[2px] pl-[3px]">
          <span className="pt-[3px] text-[15px] text-[#9a9d9f]">P...</span>
          <span className="mr-[1px] flex h-[25px] w-[24px] items-center justify-center bg-[#e1e2e6] text-[12px] text-white">×</span>
        </div>
        <div className="flex h-[25px] items-center justify-center border-2 border-[#0a78d7] bg-[#e2e2e2] font-['Liberation_Sans'] text-[12px] text-black">Start</div>
      </div>
    </div>
  )
}

/* ---------- bottom bars ---------- */

const allFrames = ['1分', '3分', '5分', '10分', '15分', '30分', '1时', '2时', '3时', '4时', '6时', '8时', '12时', '1日', '2日', '3日', '5日', '1周', '15日', '1月', '季K', '年K']

function BottomBars() {
  return (
    <div className="mt-[3px] shrink-0 border-t border-black bg-[#0d0f11]">
      <div className="flex h-[37px] items-center text-[16.200px] whitespace-nowrap text-[#6c7080]">
        <div className="flex h-full w-[128px] items-center border-r border-[#2c2e34] pt-px pl-[20px] text-[#c9ccd5]">
          <Icon size={22}><path d="M6 9 V3.500 H22 V21.500 H13 M6 9 H22 M10 1 V6 M18 1 V6 M1 18 H10 M6.500 14.500 L10 18 L6.500 21.500 M6 9 V12" /></Icon>
          <span className="ml-[8px] text-[16px] font-bold">定位到...</span>
        </div>
        <div className="flex h-full w-[127px] items-center border-r border-[#2c2e34] pt-px pl-[22px] text-[#c9ccd5]">
          <span className="text-[16px] font-bold">日期范围</span>
          <Chevron className="ml-[8px]" size={12} />
        </div>
        <div className="flex h-full w-[217px] items-center border-r border-[#2c2e34] pt-px pl-[26px]">
          <span className="w-[69px]">EMA</span>
          <span>清算热力图</span>
        </div>
        <span className="ml-[24px] w-[90px] pt-px text-[#1583ff]">Volume</span>
        <span className="w-[83px] pt-px text-[#1583ff]">MACD</span>
        <Icon size={15}><path d="M12 3 H2 V22 H21 V12 M8 16 L9 12 L19 2 L22 5 L12 15 Z" /></Icon>
        <span className="ml-[10px] pt-px font-bold">社区指标</span>
        <span className="ml-auto pt-px">对数</span>
        <span className="ml-[22px] pt-px text-[15px]">%</span>
        <span className="mr-[13.500px] ml-[23px] pt-px text-[#1583ff]">自动</span>
      </div>
      <div className="flex h-[37px] items-center pr-[20px] text-[16.300px] text-[#c9ccd5]">
        {allFrames.map((f, i) => (
          <span key={f} className={f === '12时'
            ? 'mx-[4.500px] flex h-full items-center rounded-[5px] bg-[#0d1b2c] px-[8px] pt-px text-[#1583ff]'
            : i === 0 ? 'pt-px pr-[12.600px] pl-[10.500px]' : 'px-[12.600px] pt-px'}>{f}</span>
        ))}
        <span className="ml-[9px] text-[17px] text-[#8b90a0]">×</span>
      </div>
    </div>
  )
}

const panels: [string, string][] = [
  ['自定义指标/回测/实盘', 'w-[220px]'], ['AI 网格', 'w-[106px]'], ['合约DCA', 'w-[120.500px]'], ['组合下单', 'w-[120px]'], ['跟单面板', 'w-[139px]'], ['AI分析', 'w-[60px]'],
]

function PanelTabs() {
  return (
    <div className="relative mt-[5px] flex h-[38px] shrink-0 items-center rounded-b-[8px] bg-[#0d0f11] text-[17.300px] whitespace-nowrap text-[#a3a8b5]">
      <div className="flex h-full w-[103px] items-center justify-center rounded-bl-[8px] bg-[#1a1c21] pt-[3px] text-[#1583ff]">委单区</div>
      <div className="flex pt-[3px] pl-[25.500px]">
        {panels.map(([p, w]) => <span key={p} className={w}>{p}</span>)}
      </div>
      <Chevron up size={13} className="mt-[3px] ml-auto text-[#8b90a0]" />
      <Icon size={17} className="mt-[5px] mr-[12px] ml-[18px] text-[#8b90a0]"><path d="M1.500 1.500 H22.500 V22.500 H1.500 Z M6.500 10 V6.500 H11 M17.500 14 V17.500 H13" /></Icon>
      <div className="absolute top-[-10px] left-[863px] flex h-[10px] w-[47px] items-center justify-center rounded-[2px] bg-[#33343b]">
        <svg width="10" height="5" viewBox="0 0 10 5"><path d="M5 0 L10 5 H0 Z" fill="#8b90a0" /></svg>
      </div>
    </div>
  )
}

function Footer() {
  return (
    <footer className="relative mt-px ml-px flex h-[45px] shrink-0 items-center rounded-tl-[8px] bg-[#0d0f11] pt-px text-[16.200px] whitespace-nowrap text-[#b5bac7]">
      <span className="ml-[15px] w-[77px] text-[15.800px]">资产(₮)</span>
      <span className="w-[168px] text-[#1583ff]">多账户资产分析</span>
      <Icon size={15} className="text-[#8b90a0]" sw={1}><path d="M1 22 L2.500 15 L12 5.500 L18 11.500 L8 21 Z M14 4 L17 1 L22.500 6.500 L19.500 9.500 Z M14 21 H23 V22 H14 Z" fill="currentColor" /></Icon>
      <span className="ml-[28px] w-[200px] tracking-[0.250px]">CME比特币期货CFD-雅虎</span>
      <span className="w-[66px] text-[#27936f]">+0.29%</span>
      <span className="w-[106px]">78,930.0</span>
      <span className="flex h-[25px] w-[47px] items-center justify-center rounded-full bg-[#0d1b2c] text-[15px] font-medium text-[#1583ff]">主力</span>
      <span className="ml-[13px] w-[129px]">BTC主力24H挂单</span>
      <span className="text-[#e39a2d]">259.6亿元</span>
      <Icon size={20} className="mr-[12px] ml-auto"><path d="M1.500 8.500 C7 3 17 3 22.500 8.500 M5 12.500 C9 9 15 9 19 12.500 M8.500 16.500 C10.500 14.500 13.500 14.500 15.500 16.500" /><circle cx="12" cy="20" r="1" fill="currentColor" /></Icon>
      <span className="w-[55px]">线路3 :</span>
      <span className="w-[49px] text-[#27936f]">优</span>
      <span className="w-[166px]">SGT 08/26 09:27:15</span>
      {/* watermark */}
      <div className="absolute top-[5px] left-[1690px] flex items-center text-[#e4e4e4]">
        <svg width="27" height="28" viewBox="0 0 27 28" fill="#dedede">
          <path d="M13.500 0 L22 8.500 L18.500 12 L13.500 7 L8.500 12 L5 8.500 Z M13.500 28 L22 19.500 L18.500 16 L13.500 21 L8.500 16 L5 19.500 Z M13.500 10.700 L16.800 14 L13.500 17.300 L10.200 14 Z M3.300 10.700 L6.600 14 L3.300 17.300 L0 14 Z M23.700 10.700 L27 14 L23.700 17.300 L20.400 14 Z" />
        </svg>
        <span className="ml-[5px] text-[24.500px] leading-[28px]">@陈大炮_</span>
      </div>
    </footer>
  )
}

/* ---------- right rail ---------- */

const rail = [
  <path key="0" d="M2 2.500 H7 V9.500 H2 Z M2 14.500 H7 V21.500 H2 Z M11 4 H22 M11 8.500 H22 M11 15.500 H22 M11 20.500 H22" />,
  <path key="1" d="M4 1 H20 V23 H4 Z M7.500 7 H16.500 M7.500 12 H16.500 M7.500 17.500 H12" />,
  <><path d="M7 21.500 V3.500 Q7 2 8.500 2 H21 Q22.500 2 22.500 3.500 V20 Q22.500 22 20.500 22 H3.500 Q1.500 22 1.500 20 V11.500 H7" /><path d="M17.500 9 C17 7 12.500 7 12.500 9.500 C12.500 12.500 17.500 11 17.500 14 C17.500 16.500 12.500 16.500 12 14.500 M15 5.500 V18" /></>,
  <path key="3" d="M3 23 V16 M8 23 V17 M13 23 V13 M18 23 V11 M2 12 C10 12 15 8 20 2 M15 2 H20.500 V7.500" />,
  <path key="4" d="M1.500 2 H22.500 V18 H1.500 Z M7 14 V10 M12 14 V6 M17 14 V9.500 M7 22 H17" />,
  <><rect x="1.500" y="6.500" width="18" height="15" rx="2" /><path d="M8 3 H20 Q22.500 3 22.500 5.500 V14" /><text x="10.500" y="17.200" fontSize="9" fontWeight="bold" textAnchor="middle" fill="currentColor" stroke="none">ETF</text></>,
  <><rect x="3.500" y="7" width="17" height="14" rx="2.500" /><path d="M1 11 V17 M23 11 V17 M8.500 13 V15 M15.500 13 V15" strokeWidth="2" /><path d="M12 2 V5.500" stroke="#e0433c" strokeWidth="3" /></>,
]

function RightRail() {
  return (
    <aside className="flex w-[55px] shrink-0 flex-col items-center bg-[#0d0f11] text-[#7c8090]">
      {rail.map((r, i) => (
        <div key={i} className="flex h-[70px] items-center"><Icon size={24}>{r}</Icon></div>
      ))}
      <div className="flex h-[69px] w-full items-center justify-center border-t border-[#2c2e34]">
        <Icon size={24}><circle cx="12" cy="12" r="10.800" /><path d="M5.500 10.500 H18 L14 7 M18.500 13.500 H6 L10 17" /></Icon>
      </div>
      <div className="mt-auto flex h-[71px] items-center">
        <Icon size={20}><path d="M3 2 H9.500 V22 H3 Z M14.500 2 H22 V9 H14.500 Z M14.500 14 H22 V22 H14.500 Z" /></Icon>
      </div>
      <div className="flex h-[71px] items-center">
        <Icon size={22}><path d="M2.500 13 V11 C2.500 -1 21.500 -1 21.500 11 V13 M2.500 12 H7 V19 H2.500 Z M17 12 H21.500 V19 H17 Z M21 19 C21 22 18 22.500 13 22.500" /></Icon>
      </div>
      <div className="mb-[22px] flex h-[61px] items-center">
        <svg width="26" height="26" viewBox="0 0 26 26">
          <defs>
            <linearGradient id="visor"><stop offset="0" stopColor="#7b4dff" /><stop offset="1" stopColor="#2fa8e8" /></linearGradient>
          </defs>
          <path d="M1 1 L7 2.500 Q13 0 19 2.500 L25 1 L25.500 10 Q25.500 20 13 20 Q0.500 20 0.500 10 Z" fill="#8f9299" />
          <path d="M6 20 H20 L17 24 Q13 26 9 24 Z" fill="#565961" />
          <rect x="2.500" y="5" width="21" height="13" rx="6.500" fill="#111a2c" stroke="url(#visor)" strokeWidth="1.300" />
          <ellipse cx="9" cy="11.500" rx="2.300" ry="2.800" fill="#8fd3ff" /><ellipse cx="17" cy="11.500" rx="2.300" ry="2.800" fill="#8fd3ff" />
        </svg>
      </div>
    </aside>
  )
}

export default function App() {
  return (
    <div className="flex h-[1030px] w-[1920px] flex-col overflow-hidden border border-[#2b2d30] bg-black font-[Roboto,'Noto_Sans_CJK_SC',sans-serif]">
      <Header />
      <div className="mt-px flex min-h-0 flex-1">
        <LeftNav />
        <div className="flex flex-1 flex-col">
          <div className="relative flex h-[938px] shrink-0">
            <div className="ml-[6px] flex w-[1774px] shrink-0 flex-col bg-black">
              <div className="flex flex-col rounded-t-[8px] bg-[#0d0f11]">
                <SymbolTabs />
                <div className="mt-px border-b border-black"><MainToolbar /></div>
                <DrawToolbar />
                <div className="h-px bg-black" />
              </div>
              <div className="-mt-px bg-[#0d0f11]">
                <ChartArea />
                <BottomBars />
              </div>
              <PanelTabs />
            </div>
            <div className="w-[3px]" />
            <RightRail />
            {/* collapse handles */}
            <div className="absolute top-[445px] left-[1px] flex h-[47px] w-[10px] items-center justify-center rounded-[2px] bg-[#33343b]">
              <svg width="5" height="10" viewBox="0 0 5 10"><path d="M0 0 L5 5 L0 10 Z" fill="#8b90a0" /></svg>
            </div>
            <div className="absolute top-[445px] left-[1775px] flex h-[47px] w-[7px] items-center justify-end rounded-[2px] bg-[#33343b]">
              <svg width="5" height="10" viewBox="0 0 5 10"><path d="M5 0 L0 5 L5 10 Z" fill="#8b90a0" /></svg>
            </div>
          </div>
          <Footer />
        </div>
      </div>
    </div>
  )
}
